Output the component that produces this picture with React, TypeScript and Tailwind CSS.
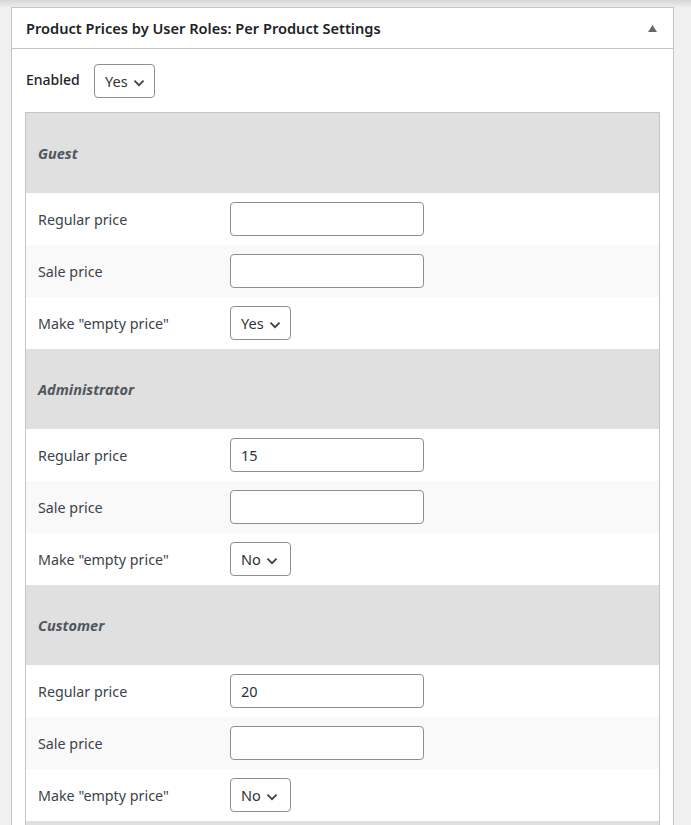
import React from 'react';

interface Role {
  name: string;
  regular: string;
  sale: string;
  empty: string;
}

const roles: Role[] = [
  { name: 'Guest', regular: '', sale: '', empty: 'Yes' },
  { name: 'Administrator', regular: '15', sale: '', empty: 'No' },
  { name: 'Customer', regular: '20', sale: '', empty: 'No' },
];

const Chevron = () => (
  <svg width="14" height="14" viewBox="0 0 20 20" className="ml-[4px] mt-[1px]">
    <path d="M3.5 6.5 L10 13 L16.5 6.5" fill="none" stroke="#3c434a" strokeWidth="2.6" />
  </svg>
);

const FakeSelect: React.FC<{ value: string }> = ({ value }) => (
  <div className="h-[34px] w-[61px] flex items-center pl-[10px] pt-[2px] border border-[#8c8f94] rounded-[4px] bg-white text-[14.5px] text-[#2c3338]">
    <span>{value}</span>
    <Chevron />
  </div>
);

const FakeInput: React.FC<{ value: string }> = ({ value }) => (
  <div className="h-[34px] w-[194px] flex items-center px-[10px] pt-[2px] border border-[#8c8f94] rounded-[4px] bg-white text-[14.5px] text-[#2c3338]">
    {value}
  </div>
);

const Row: React.FC<{ label: string; alt?: boolean; children: React.ReactNode }> = ({ label, alt, children }) => (
  <div className={`h-[52px] flex items-center ${alt ? 'bg-[#f9f9f9]' : 'bg-white'}`}>
    <div className="w-[204px] pl-[12px] pt-[2px] text-[14.3px] text-[#3c434a]">{label}</div>
    {children}
  </div>
);

export default function App() {
  return (
    <div className="h-[825px] overflow-hidden bg-[#f0f0f1] font-['Noto_Sans',sans-serif]">
      <div className="h-[7px] bg-gradient-to-b from-[#d7d7d8] to-[#ededee]" />
      <div className="ml-[11px] w-[663px] border border-[#c3c4c7] bg-white">
        <div className="h-[41px] flex items-center justify-between pl-[14px] pr-[16px] border-b border-[#c3c4c7]">
          <h2 className="pt-[1px] text-[14.6px] font-semibold text-[#1d2327]">Product Prices by User Roles: Per Product Settings</h2>
          <svg width="9" height="7" viewBox="0 0 9 7">
            <path d="M4.5 0 L9 7 L0 7 Z" fill="#646970" />
          </svg>
        </div>
        <div className="px-[13px] pt-[15px]">
          <div className="flex items-center">
            <span className="w-[69px] pl-[1px] text-[14px] font-medium text-[#1d2327] -mt-[3px]">Enabled</span>
            <FakeSelect value="Yes" />
          </div>
          <div className="mt-[14px] border border-[#c3c4c7]">
            {roles.map((role) => (
              <div key={role.name}>
                <div className="h-[80px] flex items-center pl-[12px] pt-[1px] bg-[#e0e0e0] text-[14.5px] font-bold italic text-[#50575e]">
                  {role.name}
                </div>
                <Row label="Regular price">
                  <FakeInput value={role.regular} />
                </Row>
                <Row label="Sale price" alt>
                  <FakeInput value={role.sale} />
                </Row>
                <Row label='Make "empty price"'>
                  <FakeSelect value={role.empty} />
                </Row>
              </div>
            ))}
            <div className="h-[80px] bg-[#e0e0e0]" />
          </div>
        </div>
      </div>
    </div>
  );
}
